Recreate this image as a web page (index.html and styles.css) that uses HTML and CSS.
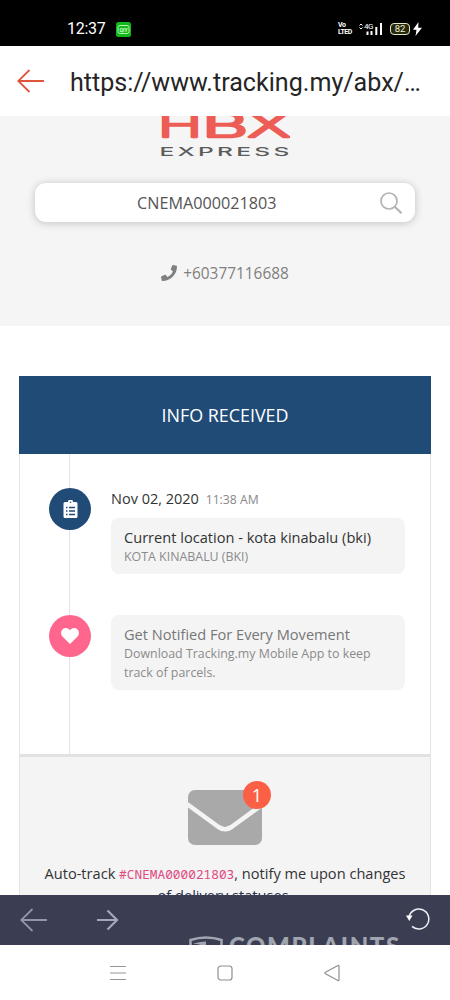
FILE: index.html
```
<!DOCTYPE html>
<html lang="en">
<head>
<meta charset="utf-8">
<title>Tracking.my</title>
<link rel="stylesheet" href="styles.css">
</head>
<body>
<div class="phone">
  <div class="status">
    <span class="clock">12:37</span>
    <svg class="app" width="15" height="15" viewBox="0 0 15 15"><rect width="15" height="15" rx="2.5" fill="#12b81b"/><rect x="2" y="3.5" width="11" height="8" rx="2" fill="none" stroke="#b4f5ae"/><text x="7.5" y="9.8" text-anchor="middle" textLength="8" lengthAdjust="spacingAndGlyphs" class="app-label">QIY</text></svg>
    <div class="volte"><span>Vo</span><span>LTED</span></div>
    <svg class="signal" width="24" height="14" viewBox="0 0 24 14"><path d="M.5 3.500 2 2l1.500 1.500M.5 5.500 2 7l1.500-1.500" fill="none" stroke="#fff"/><text x="5" y="7" class="net">4G</text><path d="M8.500 9.500v3.500M12.500 9v4M17.300 5v8M22 1v12" stroke="#fff" stroke-width="2"/></svg>
    <span class="battery">82</span>
    <svg class="bolt" width="9" height="14" viewBox="0 0 9 14"><path d="M5.500 0 0 7.700h3.500L2.500 14 9 5.700H5.200z" fill="#fff"/></svg>
  </div>
  <div class="urlbar">
    <svg width="28" height="24" viewBox="0 0 28 24"><path d="M12.500 1 1.200 12l11.300 11M1.200 12H27" fill="none" stroke="#e0543c" stroke-width="1.800"/></svg>
    <span class="url">https://www.tracking.my/abx/…</span>
  </div>
  <main class="view">
    <section class="hero">
      <svg class="logo" width="130" height="44" viewBox="0 0 130 44"><g class="logo-main"><text x="-2" y="20.500" textLength="44" lengthAdjust="spacingAndGlyphs">H</text><text x="42" y="20.500" textLength="46" lengthAdjust="spacingAndGlyphs">B</text><text x="88" y="20.500" textLength="42" lengthAdjust="spacingAndGlyphs">X</text></g><text x="-.5" y="40" textLength="133" lengthAdjust="spacingAndGlyphs" class="logo-sub">EXPRESS</text></svg>
      <div class="search"><span>CNEMA000021803</span>
        <svg width="23" height="23" viewBox="0 0 23 23"><circle cx="9" cy="9" r="8" fill="none" stroke="#b3b3b3" stroke-width="1.700"/><path d="m14.800 14.800 6.700 6.500" stroke="#b3b3b3" stroke-width="2.200"/></svg>
      </div>
      <div class="phone-no"><svg width="16" height="16" viewBox="0 0 512 512"><path fill="#808080" d="M493.400 24.600l-104-24c-11.300-2.600-22.900 3.300-27.500 13.900l-48 112c-4.200 9.800-1.400 21.300 6.900 28l60.600 49.600c-36 76.700-98.900 140.500-177.200 177.200l-49.600-60.600c-6.800-8.300-18.200-11.100-28-6.900l-112 48C3.900 366.500-2 378.100.6 389.400l24 104C27.100 504.200 36.700 512 48 512c256.100 0 464-207.500 464-464 0-11.200-7.700-20.900-18.600-23.400z"/></svg><span>+60377116688</span></div>
    </section>
    <section class="card">
      <h1 class="card-title">INFO RECEIVED</h1>
      <div class="timeline">
        <div class="event">
          <div class="dot blue"><svg width="15" height="19" viewBox="0 0 15 19"><path d="M2 2h3a2.500 2.500 0 0 1 5 0h3a1.500 1.500 0 0 1 1.500 1.500v13A1.500 1.500 0 0 1 13 18H2a1.500 1.500 0 0 1-1.500-1.500v-13A1.500 1.500 0 0 1 2 2z" fill="#fff"/><path d="M6 7.500h6M6 11h6M6 14.500h6M3 7.500h1.500M3 11h1.500M3 14.500h1.500" stroke="#204b77" stroke-width="1.300"/><circle cx="7.500" cy="2.200" r=".8" fill="#204b77"/></svg></div>
          <div class="event-body">
            <div class="date">Nov 02, 2020 <span>11:38 AM</span></div>
            <div class="bubble"><div class="head">Current location - kota kinabalu (bki)</div><div class="sub">KOTA KINABALU (BKI)</div></div>
          </div>
        </div>
        <div class="event second">
          <div class="dot pink"><svg width="18" height="16" viewBox="0 0 18 16"><path d="M9 16 1.500 8.500C-.5 6.300-.3 3 1.700 1.200 3.900-.7 7-.2 9 2.200 11-.2 14.100-.7 16.300 1.200c2 1.800 2.200 5.100.2 7.300z" fill="#fff"/></svg></div>
          <div class="event-body"><div class="bubble"><div class="head muted">Get Notified For Every Movement</div><div class="sub">Download Tracking.my Mobile App to keep<br>track of parcels.</div></div></div>
        </div>
      </div>
      <div class="notify">
        <div class="mail"><svg width="74" height="55" viewBox="0 0 74 55"><rect width="74" height="55" rx="7" fill="#a9a9a9"/><path d="M-1 14 30.500 37Q37 41.500 43.500 37L75 14" fill="none" stroke="#f4f4f4" stroke-width="4.600"/></svg><span class="badge">1</span></div>
        <p class="auto">Auto-track <code>#CNEMA000021803</code>, notify me upon changes<br><span class="line2">of delivery statuses.</span></p>
      </div>
    </section>
  </main>
  <div class="toolbar">
    <svg class="back" width="28" height="24" viewBox="0 0 28 24"><path d="M12.500 1 1.200 12l11.300 11M1.200 12H27" fill="none" stroke="#8f97ab" stroke-width="1.800"/></svg>
    <svg class="fwd" width="22" height="22" viewBox="0 0 22 22"><path d="m10.500 1.500 9.500 9.500-9.500 9.500M0 11h20" fill="none" stroke="#a2a9ba" stroke-width="2.200"/></svg>
    <svg class="reload" width="24" height="24" viewBox="0 0 24 24"><path d="M3 10A10 10 0 1 1 6 19.400" fill="none" stroke="#eef0f8" stroke-width="1.500"/><path d="M0 8.500h6.500L3.300 14z" fill="#fff"/></svg>
    <div class="mark"><svg width="34" height="34" viewBox="0 0 34 34"><path d="M1.500 11V4Q17-1 32.500 4V14Q31 26 17 33 3 26 1.500 11z" fill="none" stroke="#a1a5b0" stroke-width="2.600"/><path d="M5 7.500Q11 5.500 17 5.500V14Q12 7 5 8z" fill="#a1a5b0"/></svg><span>COMPLAINTS</span></div>
  </div>
  <div class="nav">
    <svg width="16" height="16" viewBox="0 0 16 16"><path d="M0 1.500h16M0 8h16M0 14.500h16" stroke="#969696" stroke-width="1.200"/></svg>
    <svg width="16" height="16" viewBox="0 0 16 16"><rect x="1" y="1" width="14" height="14" rx="2.800" fill="none" stroke="#909090" stroke-width="1.200"/></svg>
    <svg width="16" height="18" viewBox="0 0 16 18"><path d="M14 1.500Q15 1 15 2.300v13.400q0 1.300-1 .8L1.400 9.700q-1-.7 0-1.400z" fill="none" stroke="#909090" stroke-width="1.200"/></svg>
  </div>
</div>
</body>
</html>
```
FILE: styles.css
```
* { box-sizing: border-box; }
body { margin: 0; background: #fff; font-family: "Open Sans", sans-serif; }
svg { display: block; flex: none; }
.phone { width: 450px; height: 1000px; display: flex; flex-direction: column; overflow: hidden; }
.status { flex: none; height: 46px; padding: 12px 28px 0 67px; background: #000; color: #fff; display: flex; align-items: center; }
.clock { font: 16px/20px Roboto, sans-serif; letter-spacing: -.3px; width: 38px; white-space: nowrap; }
.app { margin-left: 11px; }
.app-label { font: bold 5px Roboto, sans-serif; fill: #d4ffd0; }
.volte { margin-left: auto; font: bold 7px/7px Roboto, sans-serif; letter-spacing: -.5px; display: flex; flex-direction: column; width: 15px; }
.signal { margin-left: 6px; }
.net { font: 8px Roboto, sans-serif; letter-spacing: -.5px; fill: #fff; }
.battery { margin-left: 7px; width: 20px; height: 12px; border: 1.500px solid #e6e8c0; border-radius: 4px; font: 9.500px/10px Roboto, sans-serif; text-align: center; background: #26290f; color: #eef0ce; }
.bolt { margin-left: 3px; }
.urlbar { flex: none; height: 70px; padding: 0 17px; display: flex; align-items: center; gap: 25px; }
.url { font: 25.100px/32px Roboto, sans-serif; color: #252525; white-space: nowrap; padding-top: 3px; }
.view { flex: none; height: 779px; overflow: hidden; }
.hero { height: 210px; background: #f5f5f5; display: flex; flex-direction: column; align-items: center; }
.logo { height: 44px; }
.logo-main { font: 200 33px Inter, sans-serif; fill: #ed5d55; stroke: #ed5d55; stroke-width: 2.600px; stroke-linejoin: round; }
.logo-sub { font: 500 12px Inter, sans-serif; letter-spacing: 1.600px; fill: #5c5c5c; }
.search { margin-top: 23px; width: 380px; height: 39px; border-radius: 11px; background: #fff; box-shadow: 0 1px 9px rgba(0,0,0,.22); padding: 0 13px 0 102px; display: flex; align-items: center; justify-content: space-between; font-size: 16.200px; color: #555; }
.search svg { margin: 2px -1px 0 0; }
.phone-no { margin-top: 40px; height: 22px; display: flex; align-items: center; gap: 6px; font-size: 15.400px; color: #808080; }
.card { margin: 50px 19px 0; border: solid #e3e3e3; border-width: 0 1px; }
.card-title { margin: 0 -1px; height: 78px; background: #204b77; color: #fff; font-size: 17.900px; font-weight: 400; line-height: 78px; text-align: center; }
.timeline { height: 300px; padding: 34px 25px 0 29px; background: linear-gradient(#e3e3e3, #e3e3e3) 49px 0 / 1px 100% no-repeat; }
.event { display: flex; gap: 20px; }
.dot { flex: none; width: 42px; height: 42px; border-radius: 50%; display: flex; align-items: center; justify-content: center; }
.blue { background: #204b77; }
.pink { background: #ff668d; }
.event-body { flex: 1; }
.date { height: 30px; font-size: 14.500px; line-height: 22px; color: #333; }
.date span { font-size: 12.200px; color: #888; margin-left: 3px; }
.bubble { background: #f4f4f4; border-radius: 8px; padding: 9px 13px 8px; }
.head { font-size: 14.600px; line-height: 20px; color: #333; white-space: nowrap; }
.muted { color: #777; }
.sub { font-size: 12.400px; line-height: 19px; color: #8b8b8b; white-space: nowrap; }
.second { margin-top: 41px; }
.notify { height: 150px; border-top: 3px solid #e2e2e2; background: #f4f4f4; display: flex; flex-direction: column; align-items: center; padding-top: 33px; }
.mail { position: relative; }
.badge { position: absolute; top: -9px; right: -9px; width: 28px; height: 28px; border-radius: 50%; background: #fb6047; color: #fff; font-size: 18px; line-height: 28px; text-align: center; }
.auto { margin: 17px 0 0; font-size: 14.600px; line-height: 22px; color: #333; text-align: center; white-space: nowrap; }
.auto code { font: 12.800px "Noto Sans Mono", "DejaVu Sans Mono", monospace; color: #e14b82; }
.line2 { color: #28304a; }
.toolbar { flex: none; height: 50px; background: #3b3e52; padding: 13px 20px 0; display: flex; align-items: flex-start; position: relative; overflow: hidden; }
.fwd { margin: 1px 0 0 49px; }
.reload { margin: -1px 0 0 auto; }
.mark { position: absolute; left: 189px; top: 41px; display: flex; }
.mark span { font: 900 24px/24px Lato, sans-serif; letter-spacing: 1.600px; color: #a1a5b0; margin: -2px 0 0 6px; }
.nav { flex: none; height: 55px; padding: 0 110px; display: flex; align-items: center; justify-content: space-between; }
```
